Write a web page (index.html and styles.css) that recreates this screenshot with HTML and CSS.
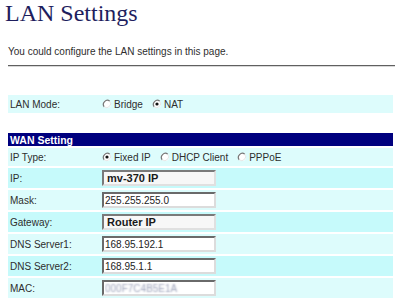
FILE: index.html
```html
<!DOCTYPE html>
<html>
<head>
<meta charset="utf-8">
<link rel="stylesheet" href="styles.css">
</head>
<body>
<h1 class="title">LAN Settings</h1>
<p class="intro">You could configure the LAN settings in this page.</p>
<div class="rule"></div>

<div class="panel lan">
  <div class="row short light">
    <span class="label">LAN Mode:</span>
    <span class="value">
      <span class="opt"><svg class="radio" viewBox="0 0 10 10"><circle cx="5" cy="5" r="4" fill="#fff"/><path d="M7.8 2.2A4 4 0 0 0 2.2 7.8" fill="none" stroke="#777" stroke-width="1.2"/><path d="M2.2 7.8A4 4 0 0 0 7.8 2.2" fill="none" stroke="#e6e6e6" stroke-width="1"/></svg>Bridge</span>
      <span class="opt"><svg class="radio" viewBox="0 0 10 10"><circle cx="5" cy="5" r="4" fill="#fff"/><path d="M7.8 2.2A4 4 0 0 0 2.2 7.8" fill="none" stroke="#777" stroke-width="1.2"/><path d="M2.2 7.8A4 4 0 0 0 7.8 2.2" fill="none" stroke="#e6e6e6" stroke-width="1"/><circle cx="5" cy="5" r="1.6" fill="#111"/></svg>NAT</span>
    </span>
  </div>
</div>

<div class="panel wan">
  <div class="head">WAN Setting</div>
  <div class="row short light">
    <span class="label">IP Type:</span>
    <span class="value">
      <span class="opt"><svg class="radio" viewBox="0 0 10 10"><circle cx="5" cy="5" r="4" fill="#fff"/><path d="M7.8 2.2A4 4 0 0 0 2.2 7.8" fill="none" stroke="#777" stroke-width="1.2"/><path d="M2.2 7.8A4 4 0 0 0 7.8 2.2" fill="none" stroke="#e6e6e6" stroke-width="1"/><circle cx="5" cy="5" r="1.6" fill="#111"/></svg>Fixed IP</span>
      <span class="opt"><svg class="radio" viewBox="0 0 10 10"><circle cx="5" cy="5" r="4" fill="#fff"/><path d="M7.8 2.2A4 4 0 0 0 2.2 7.8" fill="none" stroke="#777" stroke-width="1.2"/><path d="M2.2 7.8A4 4 0 0 0 7.8 2.2" fill="none" stroke="#e6e6e6" stroke-width="1"/></svg>DHCP Client</span>
      <span class="opt"><svg class="radio" viewBox="0 0 10 10"><circle cx="5" cy="5" r="4" fill="#fff"/><path d="M7.8 2.2A4 4 0 0 0 2.2 7.8" fill="none" stroke="#777" stroke-width="1.2"/><path d="M2.2 7.8A4 4 0 0 0 7.8 2.2" fill="none" stroke="#e6e6e6" stroke-width="1"/></svg>PPPoE</span>
    </span>
  </div>
  <div class="row cyan">
    <span class="label">IP:</span>
    <span class="value"><input class="field bold" type="text" value="mv-370 IP"></span>
  </div>
  <div class="row light">
    <span class="label">Mask:</span>
    <span class="value"><input class="field" type="text" value="255.255.255.0"></span>
  </div>
  <div class="row cyan">
    <span class="label">Gateway:</span>
    <span class="value"><input class="field bold" type="text" value="Router IP"></span>
  </div>
  <div class="row light">
    <span class="label">DNS Server1:</span>
    <span class="value"><input class="field" type="text" value="168.95.192.1"></span>
  </div>
  <div class="row cyan">
    <span class="label">DNS Server2:</span>
    <span class="value"><input class="field" type="text" value="168.95.1.1"></span>
  </div>
  <div class="row light">
    <span class="label">MAC:</span>
    <span class="value"><input class="field blur" type="text" value="000F7C4B5E1A"></span>
  </div>
</div>
</body>
</html>
```

FILE: styles.css
```css
html, body {
  margin: 0;
  padding: 0;
  background: #fff;
}

body {
  font-family: "Liberation Sans", Arial, sans-serif;
  font-size: 10px;
  color: #2e2e2e;
}

.title {
  margin: 0;
  padding-left: 5px;
  font-family: "Liberation Serif", "Times New Roman", serif;
  font-weight: normal;
  font-size: 24px;
  line-height: 27px;
  color: #1e1e5e;
}

.intro {
  margin: 18px 0 0 8px;
  line-height: 13px;
  font-size: 10px;
}

.rule {
  margin: 7px 5px 0 8px;
  height: 0;
  border-top: 1px solid #606060;
  border-bottom: 1px solid #d8d8d8;
}

.panel {
  margin: 0 7px 0 8px;
  display: flex;
  flex-direction: column;
  gap: 2px;
}

.lan {
  margin-top: 28px;
}

.wan {
  margin-top: 20px;
}

.head {
  height: 13px;
  line-height: 14px;
  padding-left: 2px;
  background: #00007e;
  color: #fff;
  font-weight: bold;
  font-size: 10.5px;
}

.row {
  display: flex;
  align-items: center;
  height: 20px;
}

.row.short {
  height: 18px;
}

.light {
  background: #ddfcfc;
}

.cyan {
  background: #c6fafb;
}

.label {
  width: 92px;
  padding-left: 2px;
  flex: none;
}

.value {
  display: flex;
  align-items: center;
  gap: 9px;
}

.opt {
  display: inline-flex;
  align-items: center;
  gap: 2px;
}

.radio {
  width: 10px;
  height: 10px;
  display: block;
}

.field {
  box-sizing: border-box;
  width: 114px;
  height: 16px;
  margin: 0;
  padding: 0 0 0 1px;
  border: 2px solid;
  border-color: #6a6a6a #dcdcdc #dcdcdc #6a6a6a;
  background: #fff;
  font-family: "Liberation Sans", Arial, sans-serif;
  font-size: 10px;
  color: #222;
  outline: none;
}

.field.bold {
  font-weight: bold;
  font-size: 11px;
  padding-left: 3px;
  background: #f7f7f7;
  border-color: #7a7a7a #e0e0e0 #e0e0e0 #7a7a7a;
  color: #1a1a1a;
}

.field.blur {
  color: transparent;
  text-shadow: 0 0 2px #9aa0b8;
}
```
